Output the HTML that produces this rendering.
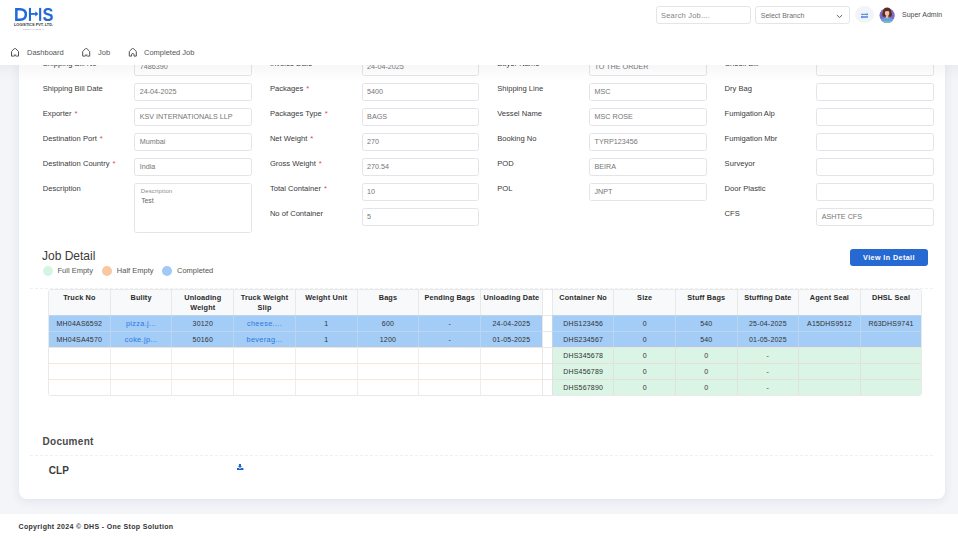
<!DOCTYPE html>
<html><head><meta charset="utf-8">
<style>
*{box-sizing:border-box;margin:0;padding:0}
html,body{width:958px;height:538px;overflow:hidden}
body{font-family:"Liberation Sans",sans-serif;background:#f3f5f8;position:relative;color:#333}
.card{position:absolute;left:19px;top:20px;width:926px;height:479px;background:#fff;border-radius:8px;box-shadow:0 2px 10px rgba(50,70,110,0.10)}
.lbl{position:absolute;font-size:7.6px;color:#3a3a3a;line-height:9px;white-space:nowrap}
.req{color:#e5484d;margin-left:3px}
.inp{position:absolute;width:117.6px;height:18px;border:1px solid #e2e4ea;border-radius:2.5px;font-size:7.2px;color:#767676;padding-left:4.5px;line-height:16px;white-space:nowrap;background:#fff}
.inp.ta{height:50px;line-height:normal}
.tal{font-size:6px;color:#8a8a8a;margin-top:3.5px;padding-left:1px;letter-spacing:0.15px;line-height:7px}
.tav{font-size:6.8px;color:#666;margin-top:2.5px;padding-left:1.5px;line-height:8px}
.hdr{position:absolute;left:0;top:0;width:958px;height:65px;background:#fff}
.hsh{position:absolute;left:0;top:65px;width:958px;height:18px;background:linear-gradient(rgba(60,60,80,0.045),rgba(60,60,80,0.012) 60%,rgba(60,60,80,0))}
.nav{position:absolute;top:48px;font-size:7.5px;color:#555;white-space:nowrap}
.nav svg{position:absolute}
.sinp{position:absolute;top:6.4px;height:17.2px;border:1px solid #e3e5ea;border-radius:3px;font-size:7.5px;color:#858585;letter-spacing:0.2px;padding-left:4px;line-height:17.5px;white-space:nowrap}
.jd{position:absolute;left:42px;top:248.5px;font-size:12px;color:#3a3a3a}
.leg{position:absolute;top:266px;font-size:7.5px;color:#555;white-space:nowrap}
.dot{position:absolute;top:265.5px;width:10px;height:10px;border-radius:50%}
.dash{position:absolute;height:0;border-top:1px dashed #f0f0f0}
.btn{position:absolute;left:850px;top:249px;width:78px;height:17px;background:#2769d3;border-radius:3px;color:#fff;font-size:7.2px;font-weight:bold;text-align:center;line-height:17.5px;letter-spacing:0.4px}
.jtw{position:absolute;left:48px;top:289px;width:874px;height:107px;border-radius:3px;overflow:hidden;border:1px solid #e9e9e9}
.jt{position:absolute;left:-1px;top:-1px;border-collapse:separate;border-spacing:0;table-layout:fixed;width:873.34px}
.jt th{background:#f8f9fa;font-size:7.3px;font-weight:bold;color:#2a2a2a;height:26px;border-left:1px solid #e8e8e8;border-top:1px solid #e8e8e8;line-height:10px;vertical-align:top;padding-top:2.5px;letter-spacing:0.15px}
.jt th.gap{background:#fff}
.jt td{height:16px;font-size:7px;color:#333;text-align:center;border-left:1px solid #e8e8e8;border-top:1px solid #e8e8e8;padding:0;white-space:nowrap;letter-spacing:0.2px}
.jt td.b{background:#a3ccf7;border-left-color:#bcd5ef;border-top-color:#bcd5ef}
.jt td.g{background:#daf5e5;border-left-color:#dfe3df;border-top-color:#eadfd3}
.jt td.e{background:#fff;border-left-color:#ededed;border-top-color:#f9e6d9}
.jt tr.r3 td.e,.jt tr.r3 td.g{border-top-color:#f2e2d8}
.jt td.gap{border-left-color:#e8e8e8}
.lnk{color:#2f78dd;font-size:7.3px;letter-spacing:0.35px}
.doc{position:absolute;left:42.5px;top:436.2px;font-size:10px;font-weight:bold;color:#4a4a4a;letter-spacing:0.28px}
.clp{position:absolute;left:48.8px;top:465.3px;font-size:10px;font-weight:bold;color:#3c3c3c;letter-spacing:0.1px}
.ftr{position:absolute;left:0;top:513.5px;width:958px;height:25px;background:#fff}
.ftr span{position:absolute;left:18.5px;top:9.2px;font-size:7px;font-weight:bold;color:#333;white-space:nowrap;letter-spacing:0.33px}
</style></head><body>
<div class="card"></div>
<div class="lbl" style="left:42.8px;top:59px">Shipping Bill No</div>
<div class="inp" style="left:134.2px;top:58px">7486390</div>
<div class="lbl" style="left:269.9px;top:59px">Invoice Date</div>
<div class="inp" style="left:361.6px;top:58px">24-04-2025</div>
<div class="lbl" style="left:497.2px;top:59px">Buyer Name</div>
<div class="inp" style="left:589px;top:58px">TO THE ORDER</div>
<div class="lbl" style="left:724.6px;top:59px">Check Bill</div>
<div class="inp" style="left:816.2px;top:58px"></div>
<div class="lbl" style="left:42.8px;top:84px">Shipping Bill Date</div>
<div class="inp" style="left:134.2px;top:83px">24-04-2025</div>
<div class="lbl" style="left:269.9px;top:84px">Packages<span class="req">*</span></div>
<div class="inp" style="left:361.6px;top:83px">5400</div>
<div class="lbl" style="left:497.2px;top:84px">Shipping Line</div>
<div class="inp" style="left:589px;top:83px">MSC</div>
<div class="lbl" style="left:724.6px;top:84px">Dry Bag</div>
<div class="inp" style="left:816.2px;top:83px"></div>
<div class="lbl" style="left:42.8px;top:109px">Exporter<span class="req">*</span></div>
<div class="inp" style="left:134.2px;top:108px">KSV INTERNATIONALS LLP</div>
<div class="lbl" style="left:269.9px;top:109px">Packages Type<span class="req">*</span></div>
<div class="inp" style="left:361.6px;top:108px">BAGS</div>
<div class="lbl" style="left:497.2px;top:109px">Vessel Name</div>
<div class="inp" style="left:589px;top:108px">MSC ROSE</div>
<div class="lbl" style="left:724.6px;top:109px">Fumigation Alp</div>
<div class="inp" style="left:816.2px;top:108px"></div>
<div class="lbl" style="left:42.8px;top:134px">Destination Port<span class="req">*</span></div>
<div class="inp" style="left:134.2px;top:133px">Mumbai</div>
<div class="lbl" style="left:269.9px;top:134px">Net Weight<span class="req">*</span></div>
<div class="inp" style="left:361.6px;top:133px">270</div>
<div class="lbl" style="left:497.2px;top:134px">Booking No</div>
<div class="inp" style="left:589px;top:133px">TYRP123456</div>
<div class="lbl" style="left:724.6px;top:134px">Fumigation Mbr</div>
<div class="inp" style="left:816.2px;top:133px"></div>
<div class="lbl" style="left:42.8px;top:159px">Destination Country<span class="req">*</span></div>
<div class="inp" style="left:134.2px;top:158px">India</div>
<div class="lbl" style="left:269.9px;top:159px">Gross Weight<span class="req">*</span></div>
<div class="inp" style="left:361.6px;top:158px">270.54</div>
<div class="lbl" style="left:497.2px;top:159px">POD</div>
<div class="inp" style="left:589px;top:158px">BEIRA</div>
<div class="lbl" style="left:724.6px;top:159px">Surveyor</div>
<div class="inp" style="left:816.2px;top:158px"></div>
<div class="lbl" style="left:42.8px;top:184px">Description</div>
<div class="inp ta" style="left:134.2px;top:183px"><div class="tal">Description</div><div class="tav">Test</div></div>
<div class="lbl" style="left:269.9px;top:184px">Total Container<span class="req">*</span></div>
<div class="inp" style="left:361.6px;top:183px">10</div>
<div class="lbl" style="left:497.2px;top:184px">POL</div>
<div class="inp" style="left:589px;top:183px">JNPT</div>
<div class="lbl" style="left:724.6px;top:184px">Door Plastic</div>
<div class="inp" style="left:816.2px;top:183px"></div>
<div class="lbl" style="left:269.9px;top:209px">No of Container</div>
<div class="inp" style="left:361.6px;top:208px">5</div>
<div class="lbl" style="left:724.6px;top:209px">CFS</div>
<div class="inp" style="left:816.2px;top:208px">ASHTE CFS</div>
<div class="jd">Job Detail</div>
<div class="dot" style="left:42.5px;background:#d5f5e3"></div><div class="leg" style="left:57.5px">Full Empty</div>
<div class="dot" style="left:101.6px;background:#f8c8a4"></div><div class="leg" style="left:116.8px">Half Empty</div>
<div class="dot" style="left:162.1px;background:#a0c9f8"></div><div class="leg" style="left:177px">Completed</div>
<div class="btn">View In Detail</div>
<div class="dash" style="left:30px;top:288px;width:903px"></div>
<div class="jtw"><table class="jt"><colgroup><col style="width:61.72px"><col style="width:61.72px"><col style="width:61.72px"><col style="width:61.72px"><col style="width:61.72px"><col style="width:61.72px"><col style="width:61.72px"><col style="width:61.72px"><col style="width:10.1px"><col style="width:61.58px"><col style="width:61.58px"><col style="width:61.58px"><col style="width:61.58px"><col style="width:61.58px"><col style="width:61.58px"></colgroup><thead><tr><th class="">Truck No</th><th class="">Bulity</th><th class="">Unloading<br>Weight</th><th class="">Truck Weight<br>Slip</th><th class="">Weight Unit</th><th class="">Bags</th><th class="">Pending Bags</th><th class="">Unloading Date</th><th class="gap"></th><th class="">Container No</th><th class="">Size</th><th class="">Stuff Bags</th><th class="">Stuffing Date</th><th class="">Agent Seal</th><th class="">DHSL Seal</th></tr></thead><tbody><tr class="r1"><td class="b">MH04AS6592</td><td class="b"><span class="lnk">pizza.j...</span></td><td class="b">30120</td><td class="b"><span class="lnk">cheese....</span></td><td class="b">1</td><td class="b">600</td><td class="b">-</td><td class="b">24-04-2025</td><td class="gap"></td><td class="b">DHS123456</td><td class="b">0</td><td class="b">540</td><td class="b">25-04-2025</td><td class="b">A15DHS9512</td><td class="b">R63DHS9741</td></tr><tr class="r2"><td class="b">MH04SA4570</td><td class="b"><span class="lnk">coke.jp...</span></td><td class="b">50160</td><td class="b"><span class="lnk">beverag...</span></td><td class="b">1</td><td class="b">1200</td><td class="b">-</td><td class="b">01-05-2025</td><td class="gap"></td><td class="b">DHS234567</td><td class="b">0</td><td class="b">540</td><td class="b">01-05-2025</td><td class="b"></td><td class="b"></td></tr><tr class="r3"><td class="e"></td><td class="e"></td><td class="e"></td><td class="e"></td><td class="e"></td><td class="e"></td><td class="e"></td><td class="e"></td><td class="gap"></td><td class="g">DHS345678</td><td class="g">0</td><td class="g">0</td><td class="g">-</td><td class="g"></td><td class="g"></td></tr><tr class="r4"><td class="e"></td><td class="e"></td><td class="e"></td><td class="e"></td><td class="e"></td><td class="e"></td><td class="e"></td><td class="e"></td><td class="gap"></td><td class="g">DHS456789</td><td class="g">0</td><td class="g">0</td><td class="g">-</td><td class="g"></td><td class="g"></td></tr><tr class="r5"><td class="e"></td><td class="e"></td><td class="e"></td><td class="e"></td><td class="e"></td><td class="e"></td><td class="e"></td><td class="e"></td><td class="gap"></td><td class="g">DHS567890</td><td class="g">0</td><td class="g">0</td><td class="g">-</td><td class="g"></td><td class="g"></td></tr></tbody></table></div>
<div class="doc">Document</div>
<div class="dash" style="left:30px;top:455px;width:903px"></div>
<div class="clp">CLP</div>
<svg style="position:absolute;left:236px;top:463px" width="8" height="8" viewBox="0 0 8 8"><rect x="2.9" y="1" width="2.1" height="2.2" fill="#2166d4"/><path d="M1.9 2.9 H6 L3.95 5 Z" fill="#2166d4"/><path d="M1 5 H2.8 L3.95 6 L5.1 5 H7.4 V7 H1 Z" fill="#1f5fd0"/></svg>
<div class="hsh"></div>
<div class="hdr">
<svg style="position:absolute;left:0;top:0" width="60" height="34" viewBox="0 0 60 34">
<path d="M16.35 9.15 V19.65 H20 C24.2 19.65 25.85 17.2 25.85 14.4 C25.85 11.6 24.2 9.15 20 9.15 Z" fill="none" stroke="#1f6ad8" stroke-width="2.5"/>
<rect x="28.9" y="7.9" width="2.1" height="13" fill="#1f6ad8"/>
<rect x="39.1" y="7.9" width="2.1" height="13" fill="#1f6ad8"/>
<path d="M31 13.9 H36" stroke="#1f6ad8" stroke-width="1.8"/>
<path d="M35.3 11.2 L38.4 13.9 L35.3 16.6 Z" fill="#1f6ad8"/>
<text x="42.6" y="20.9" font-family="Liberation Sans" font-weight="bold" font-size="18" fill="#1f6ad8" textLength="10.8" lengthAdjust="spacingAndGlyphs">S</text>
<text x="14" y="26" font-family="Liberation Sans" font-weight="bold" font-size="3.8" fill="#333" textLength="39" lengthAdjust="spacingAndGlyphs">LOGISTICS PVT. LTD.</text>
<text x="23" y="29.8" font-family="Liberation Sans" font-size="2.2" fill="#9aa6c0" textLength="21" lengthAdjust="spacingAndGlyphs">SINCE 1998 GLOBAL</text>
</svg>
<svg style="position:absolute;left:0;top:40px" width="200" height="24" viewBox="0 39.6 200 24">
<g fill="none" stroke="#505050" stroke-width="1" stroke-linejoin="round"><path d="M11.5 55.7 V51.4 Q11.5 50.9 12 50.5 L14.3 48.3 Q15 47.8 15.7 48.3 L18 50.5 Q18.5 50.9 18.5 51.4 V55.7 H16.4 Q15 54.5 13.6 55.7 Z"/><path d="M13.6 54.2 H16.4" stroke="#999" stroke-width="0.8"/><path d="M82.7 55.7 V51.4 Q82.7 50.9 83.2 50.5 L85.5 48.3 Q86.2 47.8 86.9 48.3 L89.2 50.5 Q89.7 50.9 89.7 51.4 V55.7 H87.60000000000001 Q86.2 54.5 84.8 55.7 Z"/><path d="M84.8 54.2 H87.60000000000001" stroke="#999" stroke-width="0.8"/><path d="M129.3 55.7 V51.4 Q129.3 50.9 129.8 50.5 L132.10000000000002 48.3 Q132.8 47.8 133.5 48.3 L135.8 50.5 Q136.3 50.9 136.3 51.4 V55.7 H134.0 V53.9 Q134.0 53.2 132.8 53.2 Q131.60000000000002 53.2 131.60000000000002 53.9 V55.7 Z"/></g>
</svg>
<div class="nav" style="left:27px">Dashboard</div>
<div class="nav" style="left:98px">Job</div>
<div class="nav" style="left:144px">Completed Job</div>
<div class="sinp" style="left:656px;width:94.5px">Search Job....</div>
<div class="sinp" style="left:755px;width:94.5px;font-size:7px;letter-spacing:0;padding-left:4.8px;color:#6f6f6f;line-height:18.5px">Select Branch
<svg style="position:absolute;left:79.8px;top:6.5px" width="7" height="5" viewBox="0 0 7 5"><path d="M0.9 1.1 L3.5 3.5 L6.1 1.1" fill="none" stroke="#5c5c5c" stroke-width="0.95"/></svg></div>
<div style="position:absolute;left:855.3px;top:6.4px;width:18.7px;height:16.7px;border-radius:50%;background:#f1f5f9"></div>
<svg style="position:absolute;left:858px;top:9px" width="14" height="12" viewBox="858 9 14 12">
<path d="M861 14.3 H867.6" stroke="#2f6fe0" stroke-width="0.9"/>
<path d="M866.6 13.3 L867.9 14.3 L866.6 15.3" fill="none" stroke="#2f6fe0" stroke-width="0.7"/>
<path d="M861.5 17 H868" stroke="#2f6fe0" stroke-width="1.3"/>
<path d="M862.4 16 L861.1 17 L862.4 18" fill="none" stroke="#2f6fe0" stroke-width="0.7"/>
</svg>
<svg style="position:absolute;left:878px;top:6px" width="18" height="19" viewBox="878 6 18 19">
<defs><clipPath id="av"><circle cx="887.1" cy="15.5" r="7.6"/></clipPath></defs>
<circle cx="887.1" cy="15.5" r="7.6" fill="#7a6cc6"/>
<path d="M883 16.6 Q881.7 15.2 882.6 13 Q882.8 10.4 884.1 8.7 Q885.5 7.4 887.1 7.4 Q888.7 7.4 890.1 8.7 Q891.4 10.4 891.6 13 Q892.5 15.2 891.2 16.6 Q890.2 17.2 889.4 16.4 L884.8 16.4 Q884 17.2 883 16.6 Z" fill="#5b2c20"/>
<g clip-path="url(#av)">

<path d="M878 25 Q878.5 19.2 883 18.4 L885.8 17.6 L887.1 19.4 L888.4 17.6 L891.2 18.4 Q895.7 19.2 896.2 25 Z" fill="#58a8de"/>
<rect x="878" y="21.2" width="18" height="4" fill="#93b8ab"/>
</g>
<ellipse cx="887.1" cy="12.9" rx="2.2" ry="2.8" fill="#f4c2aa"/>
<path d="M886 15 H888.2 V17.8 L887.1 19 L886 17.8 Z" fill="#f0b59c"/>
<path d="M884.6 11.6 Q885.5 8.8 887.9 9.4 Q889.6 10.2 889.7 11.8 Q888 10.2 884.6 11.6Z" fill="#5b2c20"/>
</svg>
<div class="nav" style="left:902px;top:11px;font-size:7px;color:#4a4a4a">Super Admin</div>
</div>
<div class="ftr"><span>Copyright 2024 © DHS - One Stop Solution</span></div>
</body></html>
